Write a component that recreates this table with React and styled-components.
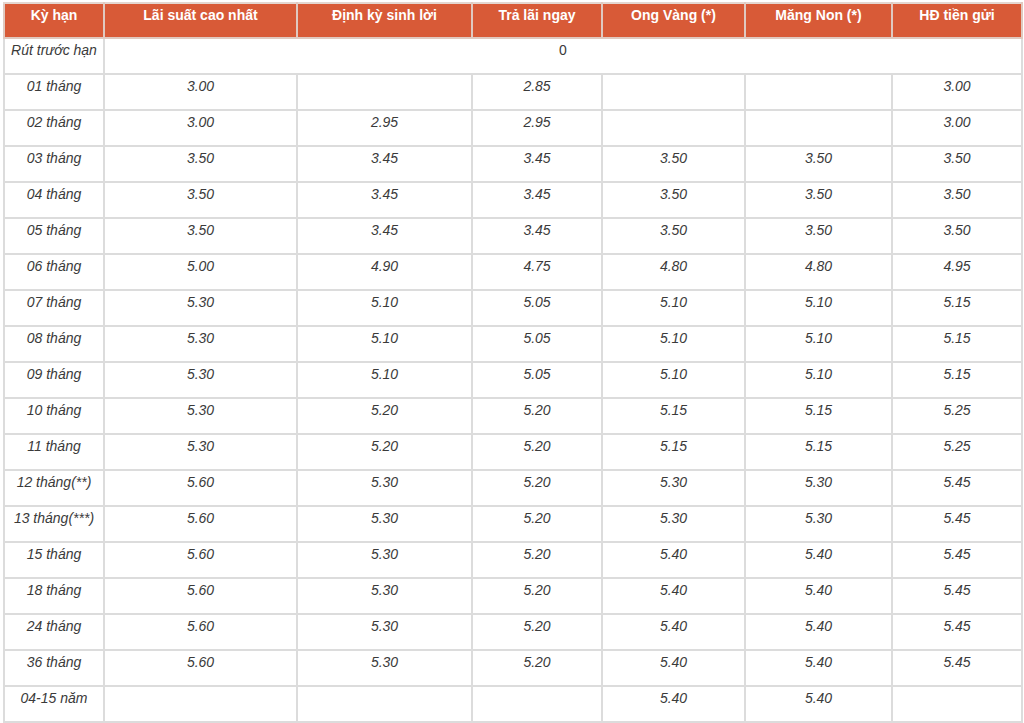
import React from 'react'
import styled, { createGlobalStyle } from 'styled-components'

const GlobalStyle = createGlobalStyle`
  body {
    margin: 0;
    background: #ffffff;
  }
`

const Wrapper = styled.div`
  padding: 2px 0 0 3px;
  width: 1018px;
`

const RateTable = styled.table`
  width: 1018px;
  table-layout: fixed;
  border-collapse: collapse;
  font-family: 'Liberation Sans', Arial, sans-serif;
  font-size: 14px;
  line-height: 16px;
`

const HeadCell = styled.th`
  height: 35px;
  box-sizing: border-box;
  padding: 3px 4px 0;
  vertical-align: top;
  text-align: center;
  font-weight: bold;
  color: #ffffff;
  background: #d85a37;
  border: 2px solid #e0c9c0;
  border-top-color: #e4d6d0;
`

const Cell = styled.td`
  height: 36px;
  box-sizing: border-box;
  padding: 3px 4px 0;
  vertical-align: top;
  text-align: center;
  font-style: ${props => (props.upright ? 'normal' : 'italic')};
  color: #3a3a3a;
  border: 2px solid #dcdcdc;
`

const widths = [100, 193, 175, 130, 143, 147, 130]

const headers = [
  'Kỳ hạn',
  'Lãi suất cao nhất',
  'Định kỳ sinh lời',
  'Trả lãi ngay',
  'Ong Vàng (*)',
  'Măng Non (*)',
  'HĐ tiền gửi',
]

const r35 = ['3.50', '3.45', '3.45', '3.50', '3.50', '3.50']
const r7 = ['5.30', '5.10', '5.05', '5.10', '5.10', '5.15']
const r10 = ['5.30', '5.20', '5.20', '5.15', '5.15', '5.25']
const r12 = ['5.60', '5.30', '5.20', '5.30', '5.30', '5.45']
const r15 = ['5.60', '5.30', '5.20', '5.40', '5.40', '5.45']

const rows = [
  ['01 tháng', ['3.00', '', '2.85', '', '', '3.00']],
  ['02 tháng', ['3.00', '2.95', '2.95', '', '', '3.00']],
  ['03 tháng', r35],
  ['04 tháng', r35],
  ['05 tháng', r35],
  ['06 tháng', ['5.00', '4.90', '4.75', '4.80', '4.80', '4.95']],
  ['07 tháng', r7],
  ['08 tháng', r7],
  ['09 tháng', r7],
  ['10 tháng', r10],
  ['11 tháng', r10],
  ['12 tháng(**)', r12],
  ['13 tháng(***)', r12],
  ['15 tháng', r15],
  ['18 tháng', r15],
  ['24 tháng', r15],
  ['36 tháng', r15],
  ['04-15 năm', ['', '', '', '5.40', '5.40', '']],
]

const App = () => {
  return (
    <Wrapper>
      <GlobalStyle />
      <RateTable>
        <colgroup>
          {widths.map((w, i) => (
            <col key={i} style={{ width: w }} />
          ))}
        </colgroup>
        <thead>
          <tr>
            {headers.map(h => (
              <HeadCell key={h}>{h}</HeadCell>
            ))}
          </tr>
        </thead>
        <tbody>
          <tr>
            <Cell>Rút trước hạn</Cell>
            <Cell colSpan={6} upright>
              0
            </Cell>
          </tr>
          {rows.map(([term, values]) => (
            <tr key={term}>
              <Cell>{term}</Cell>
              {values.map((v, i) => (
                <Cell key={i}>{v}</Cell>
              ))}
            </tr>
          ))}
        </tbody>
      </RateTable>
    </Wrapper>
  )
}

export default App
